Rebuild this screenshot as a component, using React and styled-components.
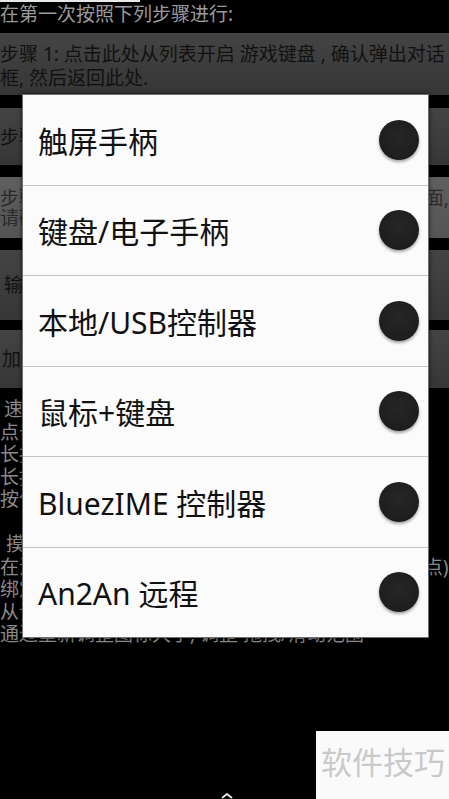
import React from "react";
import styled, { createGlobalStyle } from "styled-components";

const Global = createGlobalStyle`
  html, body { margin: 0; padding: 0; background: #000; }
  body { font-family: "Noto Sans", "Noto Sans CJK SC", sans-serif; }
`;

const Page = styled.div`
  position: relative;
  width: 449px;
  height: 799px;
  overflow: hidden;
  background: #000;
  font-family: "Noto Sans", "Noto Sans CJK SC", sans-serif;
`;

const TopEdge = styled.div`
  width: 140px;
  height: 2px;
  background: #e8e8e8;
`;

const Title = styled.div`
  height: 31px;
  font-size: 19px;
  line-height: 24px;
  color: #9b9b9b;
  white-space: nowrap;
`;

const StepButton = styled.div`
  height: ${(p) => p.$h}px;
  margin-top: ${(p) => p.$gap || 0}px;
  padding-top: ${(p) => p.$pt || 0}px;
  box-sizing: border-box;
  background: ${(p) =>
    p.$light
      ? "linear-gradient(#5f5f5f, #545454)"
      : "linear-gradient(#444444, #363636)"};
  color: ${(p) => (p.$light ? "#2a2a2a" : "#111111")};
  display: flex;
  flex-direction: column;
  justify-content: center;
  padding-left: ${(p) => p.$indent || 0}px;
  font-size: 19px;
  line-height: ${(p) => p.$lh || 24}px;
  white-space: nowrap;
  overflow: hidden;
`;

const Notes = styled.div`
  margin-top: 10px;
  font-size: 19px;
  line-height: 22.5px;
  color: #8a8a8a;
  white-space: nowrap;
`;

const NoteLine = styled.div`
  height: 22.5px;
  padding-left: ${(p) => p.$indent || 0}px;
`;

const Dialog = styled.div`
  position: absolute;
  left: 22px;
  top: 94px;
  width: 407px;
  height: 544px;
  box-sizing: border-box;
  background: #fbfbfb;
  border: 1px solid #6e6e6e;
  box-shadow: 0 0 4px rgba(0, 0, 0, 0.7);
  display: flex;
  flex-direction: column;
`;

const Option = styled.div`
  flex: 1;
  display: flex;
  align-items: center;
  justify-content: space-between;
  padding: 0 9px 0 15px;
  border-top: ${(p) => (p.$first ? "none" : "1px solid #c4c4c4")};
`;

const OptionLabel = styled.span`
  font-size: 30px;
  color: #111111;
  white-space: nowrap;
`;

const Radio = styled.span`
  width: 40px;
  height: 40px;
  border-radius: 50%;
  background: radial-gradient(circle at 50% 42%, #262626 0%, #1e1e1e 70%, #111 100%);
  box-shadow: 0 2px 3px rgba(0, 0, 0, 0.35);
  flex: none;
`;

const Watermark = styled.div`
  position: absolute;
  left: 316px;
  top: 731px;
  width: 133px;
  height: 68px;
  background: #fafafa;
  color: #c9c9c9;
  font-family: "Noto Sans CJK SC", sans-serif;
  font-size: 31px;
  line-height: 31px;
  padding: 14px 0 0 5px;
  box-sizing: border-box;
  white-space: nowrap;
`;

const NavCaret = styled.svg`
  position: absolute;
  left: 220px;
  top: 791px;
`;

const options = [
  "触屏手柄",
  "键盘/电子手柄",
  "本地/USB控制器",
  "鼠标+键盘",
  "BluezIME 控制器",
  "An2An 远程",
];

export default function App() {
  return (
    <Page>
      <Global />
      <TopEdge />
      <Title>在第一次按照下列步骤进行:</Title>
      <StepButton $h={62} $pt={4}>
        <div>步骤 1: 点击此处从列表开启 游戏键盘 , 确认弹出对话</div>
        <div>框, 然后返回此处.</div>
      </StepButton>
      <StepButton $h={57} $gap={13}>
        <div>步骤 2: 点击此处选择 游戏键盘 作为输入法</div>
      </StepButton>
      <StepButton $h={61} $gap={12} $light $lh={20} $pt={0}>
        <div>步骤 3: 点击此处选择游戏键盘作为当前的输入法界面,</div>
        <div>请确认后返回此处.</div>
      </StepButton>
      <StepButton $h={70} $gap={12} $indent={4}>
        <div>输入法设置</div>
      </StepButton>
      <StepButton $h={58} $gap={10} $indent={2}>
        <div>加载配置文件</div>
      </StepButton>
      <Notes>
        <NoteLine $indent={4}>速度设置:</NoteLine>
        <NoteLine>点击按钮模拟按键按下</NoteLine>
        <NoteLine>长按按钮持续按住按键</NoteLine>
        <NoteLine>长按并拖动调整按钮位置</NoteLine>
        <NoteLine>按住菜单键打开设置</NoteLine>
        <NoteLine />
        <NoteLine $indent={6}>摸屏说明:</NoteLine>
        <NoteLine>在滑动区域内滑动手指以模拟鼠标移动(需要设置锚点)</NoteLine>
        <NoteLine>绑定按键到屏幕上的任意位置</NoteLine>
        <NoteLine>从设置菜单中选择布局</NoteLine>
        <NoteLine>通过重新调整图标大小, 调整 拖拽/滑动范围</NoteLine>
      </Notes>

      <Dialog>
        {options.map((o, i) => (
          <Option key={o} $first={i === 0}>
            <OptionLabel>{o}</OptionLabel>
            <Radio />
          </Option>
        ))}
      </Dialog>

      <Watermark>软件技巧</Watermark>
      <NavCaret width="14" height="8" viewBox="0 0 14 8">
        <path d="M2 7 L7 3 L12 7" stroke="#e0e0e0" strokeWidth="2" fill="none" />
      </NavCaret>
    </Page>
  );
}
